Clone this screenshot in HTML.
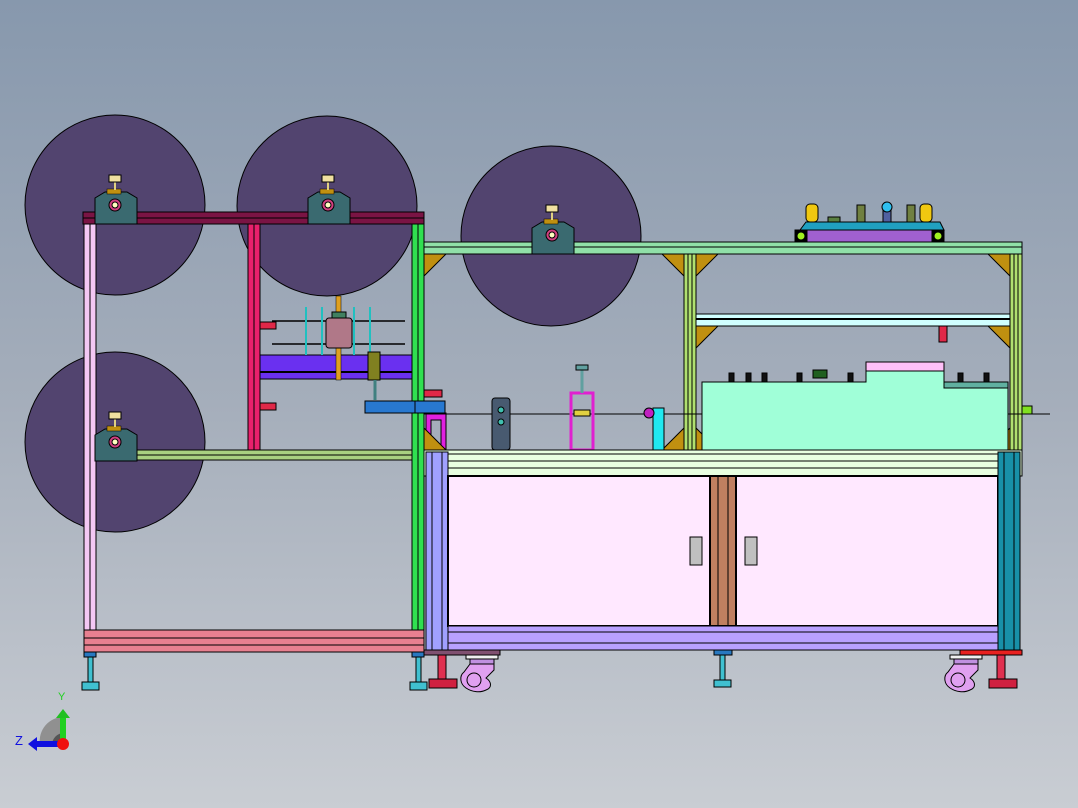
<!DOCTYPE html>
<html><head><meta charset="utf-8"><style>
html,body{margin:0;padding:0;width:1078px;height:808px;overflow:hidden}
svg{display:block}
</style></head><body>
<svg width="1078" height="808" viewBox="0 0 1078 808" xmlns="http://www.w3.org/2000/svg" stroke="#000" stroke-width="1">
<defs>
<linearGradient id="bg" x1="0" y1="0" x2="0" y2="1">
<stop offset="0" stop-color="#8798ad"/><stop offset="0.5" stop-color="#a5aebb"/><stop offset="1" stop-color="#c9cdd3"/>
</linearGradient>
</defs>
<rect width="1078" height="808" fill="url(#bg)" stroke="none"/>
<g fill="#52446f" stroke="#000">
<circle cx="115" cy="205" r="90"/>
<circle cx="327" cy="206" r="90"/>
<circle cx="551" cy="236" r="90"/>
<circle cx="115" cy="442" r="90"/>
</g>
<rect x="84" y="224" width="12" height="410" fill="#f4c8f4"/>
<line x1="90" y1="224" x2="90" y2="634"/>
<rect x="248" y="224" width="12" height="226" fill="#e8206c"/>
<line x1="254" y1="224" x2="254" y2="450"/>
<rect x="96" y="450" width="316" height="10" fill="#a8d080"/>
<line x1="96" y1="455" x2="412" y2="455"/>
<rect x="83" y="212" width="341" height="12" fill="#7a1444"/>
<line x1="83" y1="218" x2="424" y2="218"/>
<rect x="412" y="224" width="12" height="426" fill="#30e050"/>
<line x1="418" y1="224" x2="418" y2="650"/>
<rect x="84" y="630" width="340" height="22" fill="#e88090"/>
<line x1="84" y1="638" x2="424" y2="638"/><line x1="84" y1="645" x2="424" y2="645"/>
<rect x="260" y="355" width="152" height="24" fill="#6a30f0"/>
<line x1="260" y1="372" x2="412" y2="372" stroke-width="2"/>
<line x1="272" y1="321" x2="405" y2="321" stroke-width="1.5"/>
<line x1="272" y1="344" x2="405" y2="344" stroke-width="1.5"/>
<g stroke="#20c0c0" stroke-width="2"><line x1="306" y1="307" x2="306" y2="355"/><line x1="322" y1="307" x2="322" y2="355"/><line x1="354" y1="307" x2="354" y2="355"/><line x1="370" y1="307" x2="370" y2="355"/></g>
<rect x="336" y="296" width="5" height="84" fill="#e0a020" stroke-width="0.5"/>
<rect x="326" y="318" width="26" height="30" rx="3" fill="#b07888"/>
<rect x="332" y="312" width="14" height="6" fill="#408060"/>
<rect x="368" y="352" width="12" height="28" fill="#808020"/>
<line x1="375" y1="380" x2="375" y2="400" stroke="#408080" stroke-width="3"/>
<rect x="365" y="401" width="50" height="12" fill="#2878d0"/>
<rect x="260" y="322" width="16" height="7" fill="#e02848"/>
<rect x="260" y="403" width="16" height="7" fill="#e02848"/>
<rect x="424" y="390" width="18" height="7" fill="#e02848"/>
<rect x="415" y="401" width="30" height="12" fill="#2878d0"/>
<rect x="426" y="413" width="20" height="36" fill="#e020e0"/>
<rect x="431" y="420" width="10" height="29" fill="#a5aebb"/>
<rect x="424" y="242" width="598" height="12" fill="#90e0a8"/>
<line x1="424" y1="247" x2="1022" y2="247"/>
<rect x="684" y="254" width="12" height="196" fill="#b0e070"/>
<line x1="688" y1="254" x2="688" y2="450"/><line x1="692" y1="254" x2="692" y2="450"/>
<rect x="1010" y="254" width="12" height="196" fill="#b0e070"/>
<line x1="1014" y1="254" x2="1014" y2="450"/><line x1="1018" y1="254" x2="1018" y2="450"/>
<rect x="696" y="314" width="314" height="12" fill="#d0ffff"/>
<line x1="696" y1="319" x2="1010" y2="319" stroke-width="2"/>
<g fill="#c09010">
<path d="M424 254h22l-22 22z"/><path d="M696 254h22l-22 22z"/><path d="M684 254h-22l22 22z"/><path d="M1010 254h-22l22 22z"/>
<path d="M696 326h22l-22 22z"/><path d="M1010 326h-22l22 22z"/>
<path d="M424 450v-22l22 22z"/><path d="M684 450h-22l22-22z"/><path d="M696 450h22l-22-22z"/><path d="M1010 450h-22l22-22z"/>
</g>
<rect x="939" y="326" width="8" height="16" fill="#e02848"/>
<line x1="424" y1="414" x2="1050" y2="414"/>
<path d="M702 382h164v-12h78v12h64v68h-306z" fill="#a0ffd8"/>
<rect x="866" y="362" width="78" height="9" fill="#ffc0f8"/>
<rect x="944" y="382" width="64" height="6" fill="#60b0a0"/>
<rect x="813" y="370" width="14" height="8" fill="#206020"/>
<g fill="#111"><rect x="729" y="373" width="5" height="9"/><rect x="746" y="373" width="5" height="9"/><rect x="762" y="373" width="5" height="9"/><rect x="797" y="373" width="5" height="9"/><rect x="848" y="373" width="5" height="9"/><rect x="958" y="373" width="5" height="9"/><rect x="984" y="373" width="5" height="9"/></g>
<rect x="1022" y="406" width="10" height="8" fill="#80e020"/>
<rect x="492" y="398" width="18" height="52" rx="3" fill="#485a70"/>
<circle cx="501" cy="410" r="3" fill="#40c0b0"/><circle cx="501" cy="422" r="3" fill="#40c0b0"/>
<rect x="571" y="393" width="22" height="57" fill="none" stroke="#e020d0" stroke-width="3"/>
<rect x="574" y="410" width="16" height="6" fill="#e0d040"/>
<line x1="582" y1="370" x2="582" y2="393" stroke="#60a0a0" stroke-width="3"/>
<rect x="576" y="365" width="12" height="5" fill="#60a0a0"/>
<rect x="653" y="408" width="11" height="42" fill="#20e8f0"/>
<circle cx="649" cy="413" r="5" fill="#c020c0"/>
<rect x="424" y="450" width="598" height="26" fill="#e8ffe0"/>
<line x1="446" y1="454" x2="1000" y2="454"/><line x1="446" y1="461" x2="1000" y2="461"/><line x1="446" y1="468" x2="1000" y2="468"/>
<rect x="426" y="452" width="22" height="198" fill="#a0a0ff"/>
<line x1="432" y1="452" x2="432" y2="650"/><line x1="442" y1="452" x2="442" y2="650"/>
<rect x="448" y="476" width="550" height="150" fill="#ffe8ff" stroke-width="2"/>
<rect x="710" y="476" width="26" height="150" fill="#c08060" stroke-width="2"/>
<line x1="718" y1="476" x2="718" y2="626"/><line x1="728" y1="476" x2="728" y2="626"/>
<rect x="690" y="537" width="12" height="28" fill="#c0c0c0"/>
<rect x="745" y="537" width="12" height="28" fill="#c0c0c0"/>
<rect x="998" y="452" width="22" height="200" fill="#1890a8"/>
<line x1="1004" y1="452" x2="1004" y2="652"/><line x1="1014" y1="452" x2="1014" y2="652"/>
<rect x="448" y="626" width="550" height="24" fill="#b8a0ff"/>
<line x1="448" y1="632" x2="998" y2="632"/><line x1="448" y1="643" x2="998" y2="643"/>
<rect x="960" y="650" width="62" height="5" fill="#e82020"/>
<rect x="424" y="650" width="76" height="5" fill="#805070"/>
<g fill="#e0a0f0">
<rect x="466" y="655" width="32" height="4" fill="#f0f0f0"/>
<rect x="470" y="659" width="24" height="5" fill="#c090e0"/>
<path d="M470 664h24v6l-8 8c6 4 6 10 0 12c-6 3-14 2-20-2c-6-4-7-12-2-16z"/>
<circle cx="474" cy="680" r="7" fill="none"/>
<rect x="950" y="655" width="32" height="4" fill="#f0f0f0"/>
<rect x="954" y="659" width="24" height="5" fill="#c090e0"/>
<path d="M954 664h24v6l-8 8c6 4 6 10 0 12c-6 3-14 2-20-2c-6-4-7-12-2-16z"/>
<circle cx="958" cy="680" r="7" fill="none"/>
</g>
<g>
<rect x="438" y="655" width="8" height="24" fill="#e03050"/><rect x="429" y="679" width="28" height="9" fill="#d02040"/>
<rect x="997" y="655" width="8" height="24" fill="#e03050"/><rect x="989" y="679" width="28" height="9" fill="#d02040"/>
<rect x="714" y="650" width="18" height="5" fill="#2878c0"/><rect x="720" y="655" width="5" height="25" fill="#40c0d0"/><rect x="714" y="680" width="17" height="7" fill="#40c0d0"/>
<rect x="84" y="652" width="12" height="5" fill="#2878c0"/><rect x="88" y="657" width="5" height="25" fill="#40c0d0"/><rect x="82" y="682" width="17" height="8" fill="#40c0d0"/>
<rect x="412" y="652" width="12" height="5" fill="#2878c0"/><rect x="416" y="657" width="5" height="25" fill="#40c0d0"/><rect x="410" y="682" width="17" height="8" fill="#40c0d0"/>
</g>
<path d="M800 230l6-8h134l4 8z" fill="#20a0c0"/>
<rect x="795" y="230" width="149" height="12" fill="#a060d0"/>
<rect x="795" y="230" width="12" height="12" fill="#000"/><circle cx="801" cy="236" r="4" fill="#a0f020"/>
<rect x="932" y="230" width="12" height="12" fill="#000"/><circle cx="938" cy="236" r="4" fill="#a0f020"/>
<rect x="806" y="204" width="12" height="18" rx="4" fill="#f0c810"/>
<rect x="920" y="204" width="12" height="18" rx="4" fill="#f0c810"/>
<rect x="857" y="205" width="8" height="17" fill="#708040"/>
<rect x="907" y="205" width="8" height="17" fill="#708040"/>
<rect x="883" y="207" width="8" height="15" fill="#5060a0"/><circle cx="887" cy="207" r="5" fill="#30c0f0"/>
<rect x="828" y="217" width="12" height="5" fill="#5a8040"/>
<g id="bb">
<path d="M95 198l10-6h22l10 6v26h-42z" fill="#3a6a70"/>
<rect x="107" y="189" width="14" height="5" fill="#c09010" stroke-width="0.5"/>
<circle cx="115" cy="205" r="6" fill="#d04080"/><circle cx="115" cy="205" r="3" fill="#ffffc0"/>
<line x1="115" y1="182" x2="115" y2="190" stroke="#e0d080" stroke-width="2"/>
<rect x="109" y="175" width="12" height="7" fill="#f0e0a0"/>
</g>
<use href="#bb" x="213" y="0"/>
<use href="#bb" x="437" y="30"/>
<use href="#bb" x="0" y="237"/>
<path d="M40 745a24 24 0 0 1 24-28v28z" fill="#909090" stroke="none"/>
<path d="M52 745a12 12 0 0 1 12-12v12z" fill="#555" stroke="none"/>
<rect x="60" y="717" width="6" height="27" fill="#20d020" stroke="none"/><path d="M56 718l7-9 7 9z" fill="#20c020" stroke="none"/>
<rect x="36" y="741" width="26" height="6" fill="#1010e0" stroke="none"/><path d="M37 737l-9 7 9 7z" fill="#1010e0" stroke="none"/>
<circle cx="63" cy="744" r="6" fill="#f01010" stroke="none"/>
<text x="58" y="700" font-family="Liberation Sans, sans-serif" font-size="11" fill="#20d020" stroke="none">Y</text>
<text x="15" y="745" font-family="Liberation Sans, sans-serif" font-size="13" fill="#1010e0" stroke="none">Z</text>
</svg>
</body></html>
